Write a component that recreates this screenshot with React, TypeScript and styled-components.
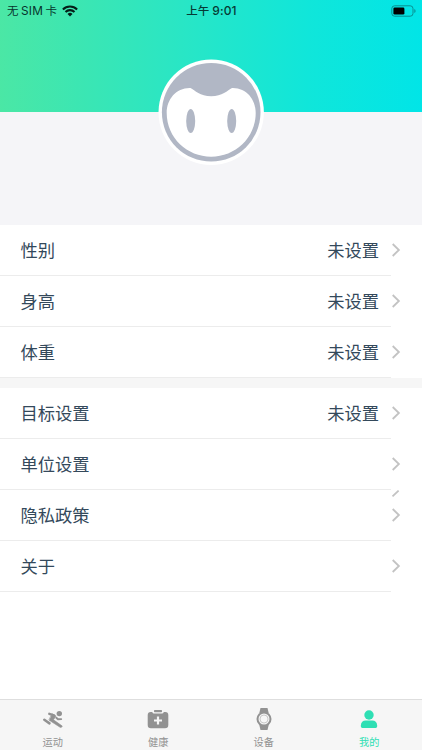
import React from 'react';
import styled, { createGlobalStyle } from 'styled-components';

const Global = createGlobalStyle`
  * { box-sizing: border-box; }
  body { margin: 0; background: #fff; font-family: Inter, "Noto Sans CJK SC", sans-serif; }
`;
const Screen = styled.div`
  width: 422px; height: 750px; display: flex; flex-direction: column;
  overflow: hidden; background: #fff;
`;
const Profile = styled.header`
  height: 225px; flex: none; background: #f5f5f8;
`;
const Banner = styled.div`
  height: 112px;
  background: linear-gradient(91deg, #4be7a5 0%, #3be6b3 20%, #25e6c9 48%, #10e6da 73%, #01e5e7 100%);
`;
const StatusBar = styled.div`
  height: 22px; display: grid; grid-template-columns: 1fr auto 1fr; align-items: center;
  padding: 0 6px 0 7px; color: #07352d; font-size: 11.5px; line-height: 22px; white-space: nowrap;
`;
const Carrier = styled.div`
  display: flex; align-items: center; gap: 2.5px;
  svg { margin-left: 2.5px; }
`;
const Latin = styled.span`font-size: 11.8px; letter-spacing: 0.2px;`;
const Clock = styled.div`
  display: flex; gap: 3px; font-weight: 500; color: #063a34;
`;
const Time = styled.span`font-size: 12px; letter-spacing: 0.1px;`;
const Power = styled.div`display: flex; justify-content: flex-end;`;
const Avatar = styled.div`
  width: 106px; height: 106px; margin: -53px auto 0; position: relative;
  svg { display: block; }
`;
const List = styled.ul`
  margin: 0; padding: 0; list-style: none; background: #fff; flex: none;
`;
const Separator = styled.div`height: 10px; background: #f6f6f6; flex: none;`;
const Row = styled.li`
  height: 51px; position: relative; display: flex; align-items: center;
  padding: 0 21px 1px 20.5px; color: #34495b; font-size: 17.3px;
  background: linear-gradient(#ececec, #ececec) left bottom / 391px 1.5px no-repeat;
`;
const Label = styled.span`flex: 1; line-height: 26px; padding-top: 1px;`;
const Value = styled.span`line-height: 26px; padding-top: 1px; margin-right: 12px;`;
const Fragment = styled.svg`position: absolute; left: 391px; top: 0;`;
const TabBar = styled.nav`
  height: 51px; margin-top: auto; flex: none; display: grid; grid-template-columns: repeat(4, 1fr);
  background: #f6f6f6; border-top: 1px solid #dedede;
`;
const Tab = styled.div<{ $active?: boolean }>`
  display: flex; flex-direction: column; align-items: center; padding-top: 7px;
  color: ${p => (p.$active ? '#2fdfb4' : '#929292')}; font-size: 10.2px; line-height: 14px;
  svg { display: block; margin-bottom: 4px; }
`;

const Chevron = () => (
  <svg width="10" height="16" viewBox="0 0 10 16" fill="none" stroke="#c3c3c3" strokeWidth="1.8">
    <path d="M1.700 2 7.900 8 1.700 14" />
  </svg>
);

const Wifi = () => (
  <svg width="16" height="12" viewBox="0 0 16 12" fill="none" stroke="#041e18" strokeWidth="2.1">
    <path d="M.9 4.400a10.100 10.100 0 0 1 14.200 0M3.500 7a6.400 6.400 0 0 1 9 0" />
    <path d="M8 11.500 5.500 9a3.500 3.500 0 0 1 5 0Z" fill="#041e18" stroke="none" />
  </svg>
);

const Battery = () => (
  <svg width="25" height="12" viewBox="0 0 25 12">
    <rect x=".8" y=".8" width="21.200" height="10.400" rx="2.800" fill="none" stroke="#0a8f91" />
    <rect x="2.400" y="2.400" width="11" height="7.200" rx="1.300" fill="#000" />
    <path d="M23.300 4v4q1.300-.6 1.300-2t-1.300-2Z" fill="#0a8f91" />
  </svg>
);

const Face = () => (
  <svg width="106" height="106" viewBox="0 0 106 106">
    <circle cx="53.200" cy="53.300" r="52.700" fill="#fff" />
    <circle cx="53.200" cy="53.300" r="49.300" fill="#b1b7c5" />
    <path d="M32.500 29C37 31.500 42 37.200 53.200 37.200S69.500 31.500 74 29C88 28.500 97.700 40 97.700 54 97.700 79 77 97.700 53.200 97.700S8.700 79 8.700 54C8.700 40 18.500 28.500 32.500 29Z" fill="#fff" />
    <ellipse cx="32.700" cy="62" rx="4.500" ry="12" fill="#b1b7c5" />
    <ellipse cx="73.700" cy="62" rx="4.500" ry="12" fill="#b1b7c5" />
  </svg>
);

const Runner = () => (
  <svg width="24" height="24" viewBox="0 0 24 24" fill="none" stroke="currentColor" strokeLinecap="round" strokeLinejoin="round">
    <circle cx="18.300" cy="6.600" r="2.700" fill="currentColor" stroke="none" />
    <path d="M8.300 6.800 13 8.300" strokeWidth="2.400" />
    <path d="M11.200 6.900 15.100 8.900 12.500 12.800 21.300 19.100Q20.800 20.800 19.100 20.300L8.200 13.200Z" fill="currentColor" strokeWidth=".6" />
    <path d="M3.300 12.800 8.500 16.400" strokeWidth="2.500" />
    <path d="M15.300 10.700 17 12.300 20.200 12.100" strokeWidth="1.900" />
  </svg>
);

const Kit = () => (
  <svg width="24" height="24" viewBox="0 0 24 24" fill="currentColor">
    <rect x="8" y="3" width="8" height="2.200" rx=".7" />
    <path d="M4.700 5h1.500q.6 1.600 1.800 1.600h8q1.200 0 1.800-1.600h1.500Q22.300 5 22.300 8v10q0 3.300-3.300 3.300H5Q1.700 21.300 1.700 18V8Q1.700 5 4.700 5Z" />
    <path d="M12 9.500v8M8 13.500h8" stroke="#f6f6f6" strokeWidth="2.200" />
  </svg>
);

const Watch = () => (
  <svg width="24" height="24" viewBox="0 0 24 24">
    <path d="M8.500 1h7l1.200 5H7.300ZM7.300 18h9.400l-1.200 5h-7Z" fill="currentColor" />
    <circle cx="12" cy="12" r="7.500" fill="currentColor" />
    <circle cx="12" cy="12" r="5.500" fill="#f3f3f3" />
    <circle cx="12" cy="12" r="4" fill="#f7f7f7" stroke="#b7b7b7" strokeWidth=".7" />
  </svg>
);

const Person = () => (
  <svg width="24" height="24" viewBox="0 0 24 24" fill="currentColor">
    <circle cx="12" cy="8" r="4.700" />
    <path d="M5.300 21Q3.900 21 3.900 19.600V18.200c0-3 2.100-4.700 4.700-4.700h6.800c2.600 0 4.700 1.700 4.700 4.700v1.400Q20.100 21 18.700 21Z" />
  </svg>
);

const measurements = ['性别', '身高', '体重'];
const settings = [
  { label: '目标设置', value: '未设置' },
  { label: '单位设置' },
  { label: '隐私政策', clipped: true },
  { label: '关于' },
];
const tabs = [
  { label: '运动', Icon: Runner },
  { label: '健康', Icon: Kit },
  { label: '设备', Icon: Watch },
  { label: '我的', Icon: Person },
];

export default function App() {
  return (
    <Screen>
      <Global />
      <Profile>
        <Banner>
          <StatusBar>
            <Carrier><span>无</span><Latin>SIM</Latin><span>卡</span><Wifi /></Carrier>
            <Clock><span>上午</span><Time>9:01</Time></Clock>
            <Power><Battery /></Power>
          </StatusBar>
        </Banner>
        <Avatar><Face /></Avatar>
      </Profile>
      <List>
        {measurements.map(label => (
          <Row key={label}><Label>{label}</Label><Value>未设置</Value><Chevron /></Row>
        ))}
      </List>
      <Separator />
      <List>
        {settings.map(({ label, value, clipped }) => (
          <Row key={label}>
            <Label>{label}</Label>
            {value && <Value>{value}</Value>}
            <Chevron />
            {clipped && (
              <Fragment width="10" height="8" viewBox="0 0 10 8" fill="none" stroke="#c3c3c3" strokeWidth="1.800">
                <path d="M1.500 6.300 7.600.6" />
              </Fragment>
            )}
          </Row>
        ))}
      </List>
      <TabBar>
        {tabs.map(({ label, Icon }) => (
          <Tab key={label} $active={label === '我的'}><Icon />{label}</Tab>
        ))}
      </TabBar>
    </Screen>
  );
}
